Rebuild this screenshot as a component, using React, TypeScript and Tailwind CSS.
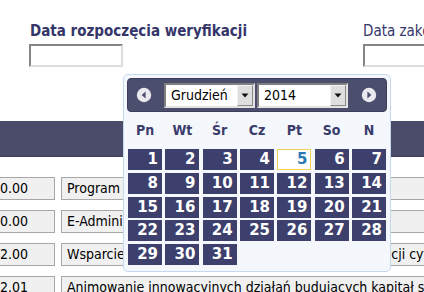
import React from 'react';

const days = Array.from({ length: 31 }, (_, i) => i + 1);
const weekdays = ['Pn', 'Wt', 'Śr', 'Cz', 'Pt', 'So', 'N'];

const rows = [
  { code: '1.0.00', name: 'Program Operacyjny Kapitał Ludzki' },
  { code: '1.0.00', name: 'E-Administracja' },
  { code: '2.2.00', name: 'Wsparcie dla przedsiębiorczości w obszarze innowacji cyfrowych' },
  { code: '2.2.01', name: 'Animowanie innowacyjnych działań budujących kapitał społeczny' },
];

function CircleArrow({ dir }: { dir: 'prev' | 'next' }) {
  return (
    <svg width="16" height="16" viewBox="0 0 16 16">
      <circle cx="8" cy="8" r="7.2" fill="#e9e9ef" />
      {dir === 'prev' ? (
        <path d="M9.6 4.6 L5.6 8 L9.6 11.4 Z" fill="#4d4f6e" />
      ) : (
        <path d="M6.4 4.6 L10.4 8 L6.4 11.4 Z" fill="#4d4f6e" />
      )}
    </svg>
  );
}

function Combo({ value }: { value: string }) {
  return (
    <div className="flex h-[25px] w-[91px] items-stretch border-2 border-t-[#7f7f7f] border-l-[#7f7f7f] border-b-[#e3e3e3] border-r-[#e3e3e3] bg-white">
      <div className="flex-1 pl-[5px] text-[14px] leading-[21px] text-black">{value}</div>
      <div className="flex w-[16px] items-center justify-center border border-t-[#f4f4f4] border-l-[#f4f4f4] border-b-[#8a8a8a] border-r-[#8a8a8a] bg-[#dedede]">
        <svg width="8" height="5" viewBox="0 0 8 5">
          <path d="M0.5 0.5 H7.5 L4 4.5 Z" fill="#111" />
        </svg>
      </div>
    </div>
  );
}

function Calendar() {
  return (
    <div className="absolute left-[123px] top-[74px] w-[268px] h-[198px] rounded-[5px] border border-[#c5d9ee] bg-[#f4f8fd] p-[3px]">
      <div className="flex h-[34px] items-center rounded-[4px] border border-[#3c3d5c] bg-[#4c4e6d] pl-[8px] pr-[9px]">
        <CircleArrow dir="prev" />
        <div className="ml-[12px] flex gap-[2px]">
          <Combo value="Grudzień" />
          <Combo value="2014" />
        </div>
        <div className="ml-auto">
          <CircleArrow dir="next" />
        </div>
      </div>
      <div className="mx-[1px] grid grid-cols-7 gap-x-[3.3px] py-[10px] text-center text-[14px] font-bold leading-[17px] text-[#3a3c6b]">
        {weekdays.map(d => <div key={d}>{d}</div>)}
      </div>
      <div className="mx-[1px] grid grid-cols-7 gap-x-[3.3px] gap-y-[2.75px]">
        {days.map(d => (
          <div
            key={d}
            className={
              d === 5
                ? 'h-[21px] border border-[#f3d152] bg-white pr-[3px] text-right text-[15px] font-bold leading-[19px] text-[#2b7ab6]'
                : 'h-[21px] bg-[#3d3f6d] pr-[4px] text-right text-[15px] font-bold leading-[21px] text-white'
            }
            style={{ fontFamily: '"DejaVu Sans", sans-serif' }}
          >
            {d}
          </div>
        ))}
      </div>
    </div>
  );
}

export default function App() {
  return (
    <div
      className="relative h-[292px] w-[424px] overflow-hidden bg-white"
      style={{ fontFamily: '"DejaVu Sans Condensed", "DejaVu Sans", sans-serif' }}
    >
      <div className="flex pl-[29px] pt-[22px]">
        <div className="w-[334px] shrink-0">
          <div className="pl-[1px] text-[15px] font-bold leading-[18px] text-[#34366a] whitespace-nowrap">
            Data rozpoczęcia weryfikacji
          </div>
          <div className="mt-[4px] h-[23px] w-[94px] border-2 border-t-[#858585] border-l-[#858585] border-b-[#dddddd] border-r-[#dddddd] bg-white" />
        </div>
        <div className="shrink-0">
          <div className="text-[15px] leading-[18px] text-[#34366a] whitespace-nowrap">Data zakończenia weryfikacji</div>
          <div className="mt-[4px] h-[23px] w-[120px] border-2 border-t-[#858585] border-l-[#858585] border-b-[#dddddd] border-r-[#dddddd] bg-white" />
        </div>
      </div>

      <div className="mt-[54px] h-[36px] border-b border-[#3f405c] bg-[#4b4c6a]" />

      <div className="mt-[20px] flex flex-col gap-[10px]">
        {rows.map(r => (
          <div key={r.code + r.name} className="flex h-[23px] gap-[6px]">
            <div className="ml-[-16px] w-[71px] shrink-0 border border-[#a7a7a7] bg-[#f0f0f0] pl-[3px] text-[14px] leading-[21px] text-black whitespace-nowrap">
              {r.code}
            </div>
            <div className="w-[420px] shrink-0 overflow-hidden border border-[#a7a7a7] bg-[#f0f0f0] pl-[5px] text-[14px] leading-[21px] text-black whitespace-nowrap">
              {r.name}
            </div>
          </div>
        ))}
      </div>

      <Calendar />
    </div>
  );
}
